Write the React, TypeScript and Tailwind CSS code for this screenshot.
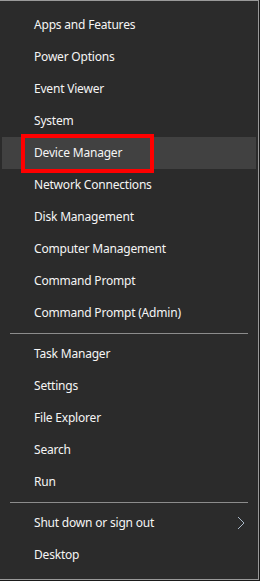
const groups = [
  ['Apps and Features', 'Power Options', 'Event Viewer', 'System', 'Device Manager', 'Network Connections', 'Disk Management', 'Computer Management', 'Command Prompt', 'Command Prompt (Admin)'],
  ['Task Manager', 'Settings', 'File Explorer', 'Search', 'Run'],
  ['Shut down or sign out', 'Desktop'],
]

function MenuItem({ label, active, sub }: { label: string; active?: boolean; sub?: boolean }) {
  return (
    <div className={`relative mx-[2px] flex h-[32px] items-center pl-[32px] pr-[10px] ${active ? 'bg-[#414141]' : ''}`}>
      <span className="flex-1 text-[12px] tracking-[-0.2px] text-[#f5f5f5]">{label}</span>
      {sub && (
        <svg width="8" height="14" viewBox="0 0 8 14" className="mr-[1px]">
          <path d="M1 1 L7 7 L1 13" fill="none" stroke="#a9b8c8" strokeWidth="1" />
        </svg>
      )}
      {active && <div className="absolute left-[19px] top-[-3px] h-[39px] w-[133px] border-[4px] border-[#ff0000]" />}
    </div>
  )
}

export default function App() {
  return (
    <div className="flex h-[581px] w-[260px] bg-[#1b1b1b]" style={{ fontFamily: '"Noto Sans", "Open Sans", sans-serif' }}>
      <div className="flex h-[580px] w-[259px] flex-col border-y border-r border-[#9a9a9a] bg-[#2b2b2b] pt-[8px]">
        {groups.map((g, gi) => (
          <div key={gi}>
            {gi > 0 && <div className="mx-[10px] my-[4px] h-px bg-[#8c8c8c]" />}
            {g.map(label => (
              <MenuItem key={label} label={label} active={label === 'Device Manager'} sub={label === 'Shut down or sign out'} />
            ))}
          </div>
        ))}
      </div>
    </div>
  )
}
